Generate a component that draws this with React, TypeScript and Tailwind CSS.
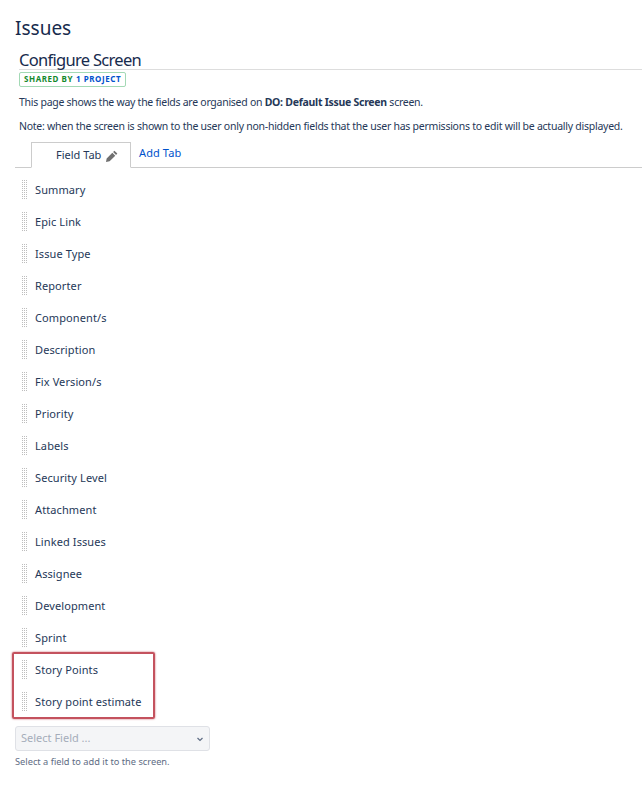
const fields = ["Summary","Epic Link","Issue Type","Reporter","Component/s","Description","Fix Version/s","Priority","Labels","Security Level","Attachment","Linked Issues","Assignee","Development","Sprint","Story Points","Story point estimate"];

function Grip() {
  const dots = [];
  for (let r = 0; r < 10; r++) for (let c = 0; c < 3; c++) dots.push(<rect key={r + "-" + c} x={c * 2} y={r * 2} width="1" height="1" fill="#bdbdbd" />);
  return <svg width="6" height="20" viewBox="0 0 6 20">{dots}</svg>;
}

export default function App() {
  return (
    <div className="relative w-[642px] h-[789px] bg-white overflow-hidden text-[#253858] font-['Noto_Sans',sans-serif] text-[11px]">
      <div className="pl-[15px] pt-[15px] text-[19px] leading-[26px] text-[#172b4d]">Issues</div>
      <div className="pl-[19px] pt-[9px] text-[16.5px] leading-[20px] text-[#172b4d] tracking-[-0.7px]">Configure Screen</div>
      <div className="ml-[19px] mt-[-1px] border-t border-[#dddddd] h-[16px]">
        <div className="inline-flex items-center h-[15px] px-[4px] mt-[1px] border border-[#a3d9b5] rounded-[2px] text-[8px] font-bold leading-none tracking-[0.55px]">
          <span className="text-[#14892c]">SHARED BY</span><span className="text-[#0052cc] ml-[3px]">1 PROJECT</span>
        </div>
      </div>
      <p className="pl-[19px] pt-[9px] leading-[16px] text-[10.5px] tracking-[-0.27px]">This page shows the way the fields are organised on <b>DO: Default Issue Screen</b> screen.</p>
      <p className="pl-[19px] pt-[8px] leading-[16px] text-[10.5px] tracking-[-0.25px] whitespace-nowrap">Note: when the screen is shown to the user only non-hidden fields that the user has permissions to edit will be actually displayed.</p>
      <div className="flex ml-[15px] mt-[8px] border-b border-[#cccccc] h-[26px]">
        <div className="ml-[16px] w-[100px] h-[26px] bg-white border border-[#cccccc] border-b-white flex items-center pl-[24px] gap-[5px] text-[#253858] pt-[1px]">
          <span>Field Tab</span>
          <svg width="12" height="12" viewBox="0 0 11 11" fill="#707070"><path d="M7.7.6l2.7 2.7-1.2 1.2-2.7-2.700zM5.800 2.500l2.700 2.700-5.200 5.200-3.300.6.6-3.300z" /></svg>
        </div>
        <a className="ml-[8px] mt-[-1px] text-[#0052cc] leading-[24px] tracking-[0.1px]">Add Tab</a>
      </div>
      <div className="mt-[6px] ml-[22px]">
        {fields.map(f => (
          <div key={f} className="flex items-center h-[32px] gap-[7px]">
            <Grip />
            <span className="text-[#253858] tracking-[0.1px]">{f}</span>
          </div>
        ))}
      </div>
      <div className="ml-[15px] mt-[8px] w-[195px] h-[25px] bg-[#f4f5f7] border border-[#dfe1e6] rounded-[3px] flex items-center justify-between pl-[5px] pr-[4px] text-[#a5adba]">
        <span>Select Field ...</span>
        <svg width="10" height="10" viewBox="0 0 10 10" fill="none" stroke="#5e6c84" strokeWidth="1.2"><path d="M2.500 4l2.500 2.500L7.500 4" /></svg>
      </div>
      <div className="ml-[15px] mt-[4px] text-[9.25px] leading-[14px] text-[#5e6c84]">Select a field to add it to the screen.</div>
      <div className="absolute left-[12px] top-[652px] w-[143px] h-[67px] border-[2px] border-[#c4525e] rounded-[2px] shadow-[0_0_2px_#c4525e]" />
    </div>
  );
}
